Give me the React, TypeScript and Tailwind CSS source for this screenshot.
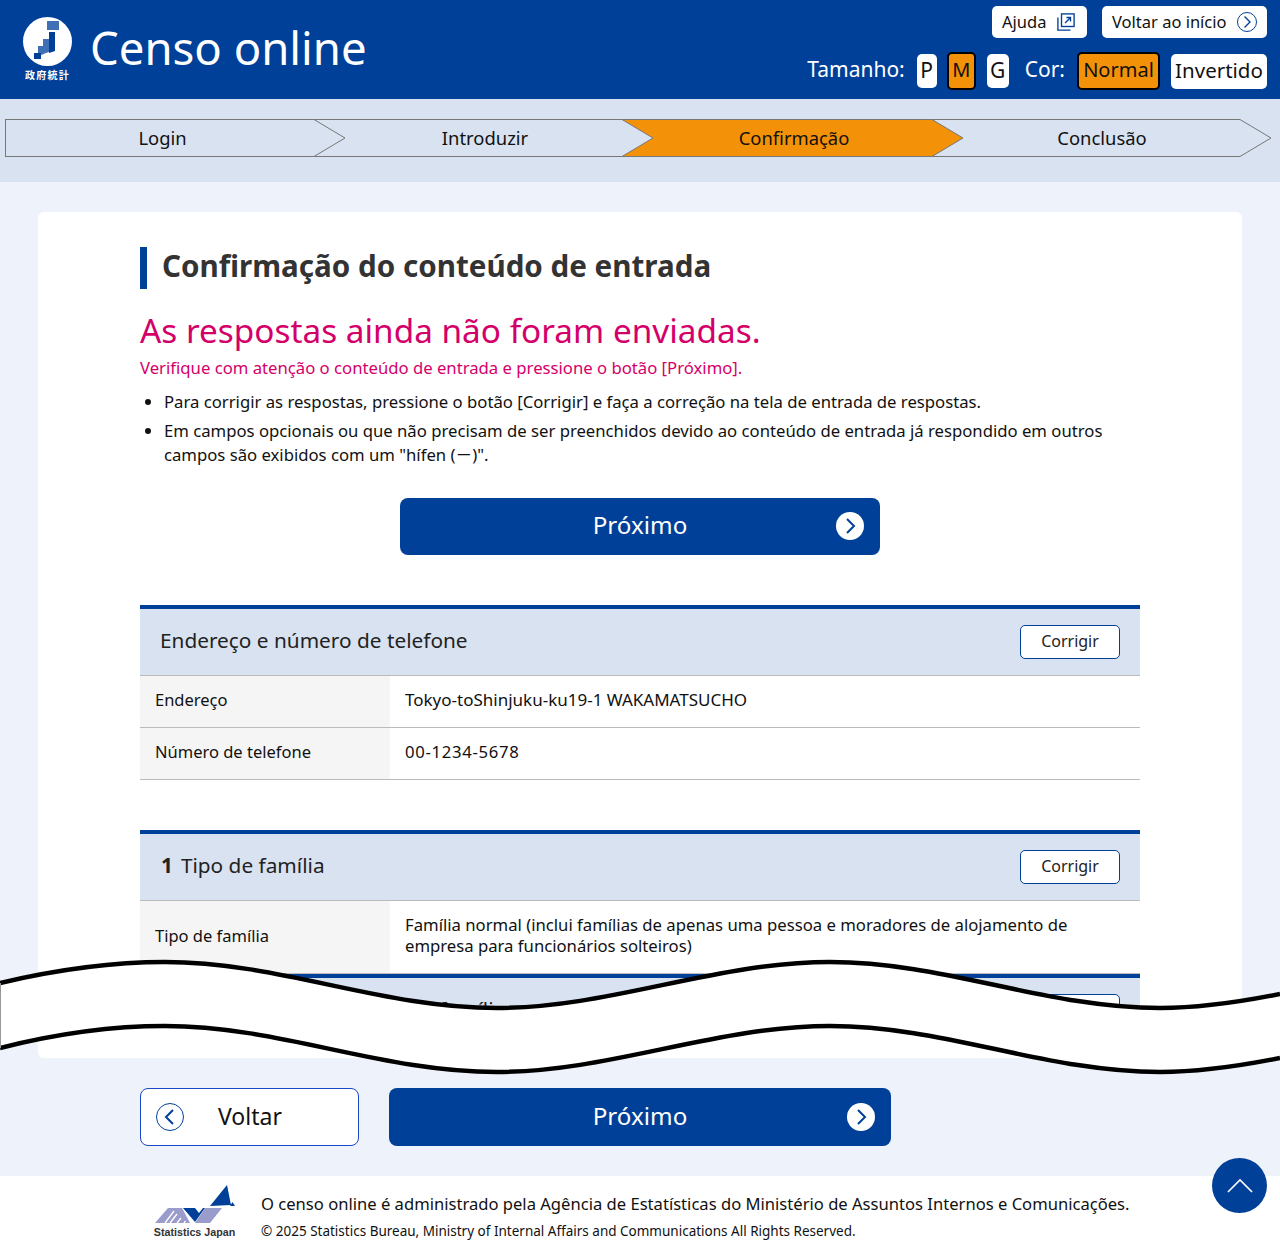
import React from 'react';

const font = 'font-["Noto_Sans","Noto_Sans_CJK_JP","Liberation_Sans",sans-serif]';

const steps = [
  { label: 'Login', width: 'w-[309px] pl-[5px]', box: 'border-l border-l-[#777]', active: false },
  { label: 'Introduzir', width: 'w-[308px] pl-[34px]', box: '', active: false },
  { label: 'Confirmação', width: 'w-[310px] pl-[34px]', box: '', active: true },
  { label: 'Conclusão', width: 'w-[308px] pl-[32px]', box: '', active: false },
];

/** Chevron in a circle used on the blue buttons */
const CircleArrow = () => (
  <svg viewBox="0 0 28 28" className="h-7 w-7 shrink-0">
    <circle cx="14" cy="14" r="14" fill="#fff" />
    <path d="M11 7l7 7-7 7" fill="none" stroke="#004098" strokeWidth="2" />
  </svg>
);

const Logo = () => (
  <div className="flex w-[49px] flex-col items-center">
    <svg viewBox="0 0 49 49" className="h-[49px] w-[49px]">
      <circle cx="24.500" cy="24.500" r="24.500" fill="#fff" />
      <rect x="24" y="4" width="12" height="9" fill="#3f6fb5" />
      <path d="M26 15h6v19l-6 2z" fill="#004098" />
      <path d="M20 22h6v13l-6 2z" fill="#3f6fb5" />
      <path d="M15 29h6v8l-6 2z" fill="#3f6fb5" />
      <path d="M11 36h7v6h-7z" fill="#004098" />
    </svg>
    <span className='mt-[2px] text-[10px] leading-[14px] font-bold tracking-[1.300px] whitespace-nowrap text-white font-["Noto_Sans_CJK_JP",sans-serif]'>政府統計</span>
  </div>
);

const Wave = () => (
  <svg viewBox="0 0 1280 130" className="pointer-events-none absolute top-[950px] left-0 h-[130px] w-[1280px]">
    <path
      d="M0 33C55 20 110 12 165 12C280 12 380 58 497 58C610 58 715 12 830 12C945 12 1045 58 1160 58C1200 58 1240 52 1280 44V108C1240 116 1200 122 1160 122C1045 122 945 76 830 76C715 76 610 122 497 122C380 122 280 76 165 76C110 76 55 84 0 98Z"
      fill="#fff"
    />
    <path d="M0 33C55 20 110 12 165 12C280 12 380 58 497 58C610 58 715 12 830 12C945 12 1045 58 1160 58C1200 58 1240 52 1280 44" fill="none" stroke="#000" strokeWidth="4.500" />
    <path d="M0 98C55 84 110 76 165 76C280 76 380 122 497 122C610 122 715 76 830 76C945 76 1045 122 1160 122C1200 122 1240 116 1280 108" fill="none" stroke="#000" strokeWidth="4.500" />
    <path d="M0.500 33V98" stroke="#999" strokeWidth="1" />
  </svg>
);

const SectionHead = ({ children }: { children: React.ReactNode }) => (
  <div className="flex h-[71px] items-center justify-between border-t-4 border-b border-t-[#004098] border-b-[#bbb] bg-[#d9e2f1] px-5">
    <h3 className="pb-[2px] text-[20.800px] text-[#222]">{children}</h3>
    <button className="h-[34px] w-[100px] rounded-[5px] border border-[#004098] bg-white pb-[2px] text-base text-[#222]">Corrigir</button>
  </div>
);

const Row = ({ label, children }: { label: string; children: React.ReactNode }) => (
  <div className="flex border-b border-[#bbb] text-[16.700px] leading-[21px] text-[#111]">
    <div className="flex w-[250px] shrink-0 items-center bg-[#f5f5f5] px-[15px] pt-[13px] pb-[17px] text-[16.500px]">{label}</div>
    <div className="px-[15px] pt-[13px] pb-[17px]">{children}</div>
  </div>
);

const StatsLogo = () => (
  <div className="flex w-[83px] flex-col items-center">
    <svg viewBox="0 0 83 43" className="h-[43px] w-[83px]">
      <path d="M74 2L57 23l21-1z" fill="#004098" />
      <path d="M77 23h5l-2.500-4z" fill="#004098" />
      <path d="M30 25h12l4 5 4-5h2L42 39z" fill="#004098" />
      <path d="M52 25h17L57 40H42z" fill="#9a9ccc" />
      <path d="M15 25h14l8 15H2z" fill="#9a9ccc" />
      <path d="M12 40l9-12M17 40l7-9M24 40l4-5M31 40l1.500-2" stroke="#fff" strokeWidth="1.300" />
    </svg>
    <span className='text-[10.700px] leading-[12px] font-bold whitespace-nowrap text-[#333] font-["Liberation_Sans",sans-serif]'>Statistics Japan</span>
  </div>
);

export default function App() {
  return (
    <div className={`relative h-[1258px] w-[1280px] overflow-hidden bg-[#eef2fa] ${font}`}>
      <header className="flex h-[99px] items-start justify-between bg-[#004098] pr-[13px] pl-[23px]">
        <div className="flex items-start gap-[18px] pt-[17px]">
          <Logo />
          <h1 className="mt-[3px] text-[45.500px] leading-[54px] text-white">Censo online</h1>
        </div>
        <div className="flex flex-col items-end pt-[6px]">
          <div className="flex gap-[15px]">
            <a className="flex h-[32px] w-[95px] items-center justify-between rounded-[5px] bg-white pr-[12px] pl-[10px] text-[16.500px] text-[#111]">
              Ajuda
              <svg viewBox="0 0 20 20" className="h-[18px] w-[18px]" fill="none" stroke="#004098" strokeWidth="1.500">
                <rect x="5" y="1" width="14" height="14" />
                <path d="M1 5v14h14M9 11l6-6M10.500 5H15v4.500" />
              </svg>
            </a>
            <a className="flex h-[32px] w-[165px] items-center justify-between rounded-[5px] bg-white px-[10px] text-[16.500px] text-[#111]">
              Voltar ao início
              <svg viewBox="0 0 20 20" className="h-5 w-5" fill="none" stroke="#004098" strokeWidth="1">
                <circle cx="10" cy="10" r="9.500" />
                <path d="M7.500 4.500L13 10l-5.500 5.500" strokeWidth="1.400" />
              </svg>
            </a>
          </div>
          <div className="mt-[14px] flex items-center text-[21px] leading-[30px] text-white">
            <span className="-translate-y-[2px]">Tamanho:</span>
            <span className="ml-[12px] flex h-[34px] w-[20px] items-center justify-center rounded-[5px] bg-white pb-[3px] text-[#111]">P</span>
            <span className="ml-[10px] flex h-[38px] w-[29px] items-center justify-center rounded-[5px] border-2 border-black bg-[#f39208] pb-[3px] text-[20px] text-[#111]">M</span>
            <span className="ml-[11px] flex h-[34px] w-[22px] items-center justify-center rounded-[5px] bg-white pb-[3px] text-[#111]">G</span>
            <span className="ml-[16px] -translate-y-[2px]">Cor:</span>
            <span className="ml-[12px] flex h-[38px] w-[83px] items-center justify-center rounded-[5px] border-2 border-black bg-[#f39208] pb-[3px] text-[20px] text-[#111]">Normal</span>
            <span className="ml-[11px] flex h-[35px] w-[96px] items-center justify-center rounded-[5px] bg-white pb-[3px] text-[20.500px] text-[#111]">Invertido</span>
          </div>
        </div>
      </header>

      <nav className="flex h-[83px] bg-[#d9e2f1] pt-[20px] pl-[5px]">
        {steps.map((s) => (
          <div
            key={s.label}
            className={`relative flex h-[38px] shrink-0 items-center border-y border-[#777] text-[18.400px] text-[#111] ${s.width} ${s.box} ${s.active ? 'bg-[#f39208]' : ''}`}
          >
            <span className="flex-1 text-center">{s.label}</span>
            <svg viewBox="0 0 32 38" className="absolute top-[-1px] left-full z-10 h-[38px] w-[32px]">
              <path d="M0 .500L31 19 0 37.500" fill={s.active ? '#f39208' : '#d9e2f1'} stroke="#777" strokeWidth="1" />
            </svg>
          </div>
        ))}
      </nav>

      <main className="px-[38px] pt-[30px]">
        <div className="h-[846px] rounded-[6px] bg-white">
          <div className="h-[794px] overflow-hidden px-[102px] pt-[35px]">
            <h2 className="border-l-[7px] border-[#004098] pb-[4px] pl-[15px] text-[29.600px] leading-[38px] font-bold text-[#333]">Confirmação do conteúdo de entrada</h2>
            <p className="mt-[17px] text-[33.350px] leading-[48px] text-[#d4006a]">As respostas ainda não foram enviadas.</p>
            <p className="mt-[2px] text-[16.700px] leading-[24px] text-[#d4006a]">Verifique com atenção o conteúdo de entrada e pressione o botão [Próximo].</p>
            <ul className="mt-[10px] list-disc pl-[24px] text-[16.700px] leading-[24px] text-[#111]">
              <li>Para corrigir as respostas, pressione o botão [Corrigir] e faça a correção na tela de entrada de respostas.</li>
              <li className="mt-[5px]">Em campos opcionais ou que não precisam de ser preenchidos devido ao conteúdo de entrada já respondido em outros campos são exibidos com um "hífen (－)".</li>
            </ul>
            <button className="relative mx-auto mt-[31px] flex h-[57px] w-[480px] items-center justify-center rounded-[8px] bg-[#004098] pb-[2px] text-[24.200px] text-white">
              Próximo
              <span className="absolute top-[14px] right-[16px]"><CircleArrow /></span>
            </button>

            <section className="mt-[50px]">
              <SectionHead>Endereço e número de telefone</SectionHead>
              <Row label="Endereço"><span className="text-[17px]">Tokyo-toShinjuku-ku19-1 WAKAMATSUCHO</span></Row>
              <Row label="Número de telefone"><span className="tracking-[0.700px]">00-1234-5678</span></Row>
            </section>

            <section className="mt-[50px]">
              <SectionHead><b className="mr-2 ml-px font-bold">1</b>Tipo de família</SectionHead>
              <Row label="Tipo de família">Família normal (inclui famílias de apenas uma pessoa e moradores de alojamento de empresa para funcionários solteiros)</Row>
            </section>
            <section>
              <SectionHead><b className="mr-2 ml-px font-bold">2</b>Número de moradores da família</SectionHead>
            </section>
          </div>
        </div>
      </main>

      <div className="mt-[30px] flex gap-[30px] pl-[140px]">
        <button className="flex h-[58px] w-[219px] items-center rounded-[8px] border border-[#1a47c4] bg-white pl-[15px] text-[23px] text-[#111]">
          <svg viewBox="0 0 28 28" className="h-7 w-7" fill="none" stroke="#004098">
            <circle cx="14" cy="14" r="13.500" strokeWidth="1" />
            <path d="M17 7l-7 7 7 7" strokeWidth="2" />
          </svg>
          <span className="ml-[34px] -translate-y-px">Voltar</span>
        </button>
        <button className="relative flex h-[58px] w-[502px] items-center justify-center rounded-[8px] bg-[#004098] pb-[2px] text-[24.200px] text-white">
          Próximo
          <span className="absolute top-[15px] right-[16px]"><CircleArrow /></span>
        </button>
      </div>

      <footer className="mt-[30px] flex h-[82px] bg-white pt-[7px] pl-[153px]">
        <StatsLogo />
        <div className="ml-[25px] pt-[9px]">
          <p className="text-[16.600px] leading-[24px] text-[#111]">O censo online é administrado pela Agência de Estatísticas do Ministério de Assuntos Internos e Comunicações.</p>
          <p className="mt-[6px] text-[13.500px] leading-[18px] text-[#111]">© 2025 Statistics Bureau, Ministry of Internal Affairs and Communications All Rights Reserved.</p>
        </div>
      </footer>

      <Wave />

      <button className="absolute top-[1158px] left-[1212px] flex h-[55px] w-[55px] items-center justify-center rounded-full bg-[#004098]">
        <svg viewBox="0 0 28 16" className="h-[15px] w-[26px]" fill="none" stroke="#fff" strokeWidth="1.800">
          <path d="M1 15L14 2l13 13" />
        </svg>
      </button>
    </div>
  );
}
